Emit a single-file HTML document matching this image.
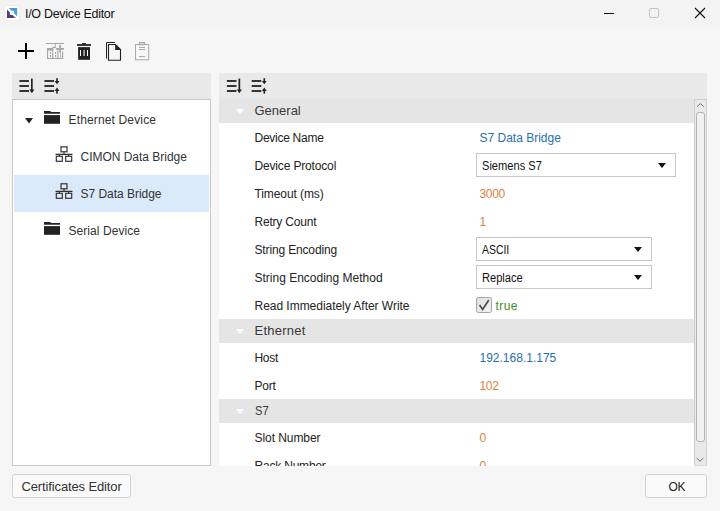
<!DOCTYPE html>
<html>
<head>
<meta charset="utf-8">
<title>I/O Device Editor</title>
<style>
html,body{margin:0;padding:0;}
body{width:720px;height:511px;overflow:hidden;background:#f6f6f6;font-family:"Liberation Sans",sans-serif;font-size:12px;color:#222;position:relative;}
.abs{position:absolute;}
.t{position:absolute;white-space:nowrap;line-height:16px;height:16px;}
#titlebar{left:0;top:0;width:720px;height:28px;background:#f3f3f3;}
.hdr{background:#e9e9e9;height:26px;top:73px;}
#tree{left:12px;top:99px;width:199px;height:367px;box-sizing:border-box;background:#fff;border:1px solid #c9c9c9;}
.sel{left:14px;top:175px;width:195px;height:37px;background:#dbeafa;}
.tl{color:#333;font-size:12px;}
#grid{left:219px;top:99px;width:475px;height:367px;background:#fff;overflow:hidden;}
.cat{position:absolute;left:0;width:475px;height:24px;background:#e5e5e5;}
.cat .t{left:35.5px;top:4px;font-size:13px;color:#3a3a3a;}
.cat i{position:absolute;left:16.5px;top:9.8px;width:0;height:0;border-left:4px solid transparent;border-right:4px solid transparent;border-top:5.6px solid #fff;}
.lbl{left:35.5px;color:#222;font-size:12px;}
.val{left:260.5px;font-size:12px;}
.blue{color:#2a6fb0;}
.org{color:#d98443;}
.grn{color:#3f8f22;}
.combo{position:absolute;left:257px;height:24px;box-sizing:border-box;border:1px solid #c6c6c6;background:#fff;}
.combo .t{left:4.8px;top:3.5px;color:#111;font-size:12px;transform-origin:0 50%;}
.combo i{position:absolute;right:8.6px;top:9.3px;width:0;height:0;border-left:4.2px solid transparent;border-right:4.2px solid transparent;border-top:5px solid #111;}
.btn{position:absolute;top:474px;height:24px;box-sizing:border-box;border:1px solid #d2d2d2;border-radius:2.5px;background:#fafafa;}
#sb{left:694px;top:99px;width:13px;height:367px;box-sizing:border-box;background:#e9e9e9;border:1px solid #cfcfcf;border-bottom-color:#dadada;}
#thumb{left:696px;top:112px;width:9px;height:330px;box-sizing:border-box;border:1px solid #b4b4b4;border-radius:3px;background:#f1f1f1;}
svg{position:absolute;overflow:visible;}
</style>
</head>
<body>
<div id="titlebar" class="abs"></div>

<!-- app icon -->
<svg style="left:4px;top:5px" width="16" height="16" viewBox="4 5 16 16">
  <rect x="4" y="5" width="16" height="16" fill="#fff"/>
  <rect x="4.5" y="5.5" width="15" height="15" fill="none" stroke="#ececec" stroke-width="1"/>
  <defs><linearGradient id="gb" x1="0" y1="0" x2="1" y2="1"><stop offset="0" stop-color="#3f9dc8"/><stop offset="1" stop-color="#4aa8d6"/></linearGradient></defs>
  <polygon points="8.8,8 17.2,8 17.2,16.4" fill="url(#gb)"/>
  <polygon points="7,9.4 7,18 15.6,18" fill="#5c3c80"/>
  <rect x="9.9" y="10.8" width="3.9" height="4" fill="#fff"/>
</svg>
<div class="t" style="left:25px;top:5.5px;font-size:12.5px;color:#111;letter-spacing:-0.3px;">I/O Device Editor</div>

<!-- window controls -->
<svg style="left:600px;top:0" width="120" height="28" viewBox="600 0 120 28">
  <rect x="604" y="13" width="10" height="1" fill="#111"/>
  <rect x="649.5" y="8.5" width="9" height="9" rx="1.5" fill="none" stroke="#c4c4c4" stroke-width="1"/>
  <path d="M695 8 L705 18 M705 8 L695 18" stroke="#111" stroke-width="1.1" fill="none"/>
</svg>

<!-- toolbar icons -->
<svg style="left:0;top:36px" width="170" height="30" viewBox="0 36 170 30">
  <!-- plus -->
  <rect x="18" y="50" width="16" height="2" fill="#000"/>
  <rect x="25" y="43" width="2" height="16" fill="#000"/>
  <!-- add device (disabled) -->
  <g fill="#a6a6a6">
    <rect x="46" y="43" width="18" height="1"/>
    <rect x="54.7" y="43" width="1" height="4.6"/>
    <rect x="52.4" y="47" width="3.3" height="1.1"/>
    <rect x="47" y="48" width="5.8" height="2.6"/>
    <rect x="47" y="48" width="1.1" height="11"/>
    <rect x="47" y="57.9" width="16.2" height="1.1"/>
    <rect x="62.1" y="51.5" width="1.1" height="7.5"/>
    <rect x="52.2" y="47.5" width="1.1" height="11"/>
    <rect x="57.3" y="50" width="1.1" height="9"/>
    <rect x="49.9" y="52" width="1.1" height="1.9"/><rect x="49.9" y="55" width="1.1" height="1.9"/>
    <rect x="55" y="52" width="1.1" height="1.9"/><rect x="55" y="55" width="1.1" height="1.9"/>
    <rect x="60" y="53.2" width="1.1" height="1.2"/><rect x="60" y="55.2" width="1.1" height="1.9"/>
    <rect x="56.1" y="48" width="7.9" height="1.8"/>
    <rect x="59.2" y="45" width="1.8" height="7.6"/>
  </g>
  <!-- trash -->
  <g fill="#222">
    <rect x="82.2" y="43" width="3.7" height="1.4"/>
    <rect x="77" y="44.1" width="14" height="1.8"/>
    <rect x="78.1" y="47.1" width="11.9" height="12.7"/>
  </g>
  <rect x="80" y="50" width="1" height="6" fill="#fff"/>
  <rect x="83.4" y="50" width="1.3" height="6" fill="#d2d2d2"/>
  <rect x="87" y="50" width="1" height="6" fill="#fff"/>
  <!-- copy -->
  <path d="M106.5 58.7 V42.5 H115" fill="none" stroke="#222" stroke-width="1"/>
  <path d="M108.5 44.5 H115.5 L120.5 49.5 V60.3 H108.5 Z" fill="none" stroke="#222" stroke-width="1.1"/>
  <polygon points="115.2,44.4 115.2,50 120.8,50" fill="#222"/>
  <!-- paste (disabled) -->
  <g fill="none" stroke="#ababab" stroke-width="1">
    <rect x="135.5" y="44.5" width="13.2" height="15.3"/>
    <rect x="139.6" y="42.6" width="4.8" height="2" stroke-width="1.3"/>
    <path d="M139 47.5 H145 M139 49.5 H145 M139 56.5 H145"/>
  </g>
</svg>

<!-- left panel -->
<div class="abs hdr" style="left:12px;width:199px;"></div>
<div id="tree" class="abs"></div>
<div class="abs sel"></div>

<!-- right panel -->
<div class="abs hdr" style="left:219px;width:488px;"></div>

<!-- sort icons (both headers) -->
<svg style="left:0;top:73px" width="300" height="26" viewBox="0 73 300 26">
  <defs>
    <g id="srt1">
      <rect x="0.4" y="7.1" width="9.6" height="1.8"/><rect x="0.4" y="12.1" width="9.6" height="1.8"/><rect x="0.4" y="17.1" width="9.6" height="1.8"/>
      <rect x="12" y="5.6" width="1.7" height="11.4"/>
      <polygon points="10.3,16.4 15.4,16.4 12.85,20.2"/>
    </g>
    <g id="srt2">
      <rect x="0.4" y="7.1" width="9.6" height="1.8"/><rect x="0.4" y="12.1" width="9.6" height="1.8"/><rect x="0.4" y="17.1" width="9.6" height="1.8"/>
      <rect x="12.2" y="5.2" width="1.6" height="4"/>
      <polygon points="10.6,8 15.4,8 13,11.3"/>
      <rect x="12.2" y="17" width="1.6" height="3.6"/>
      <polygon points="10.6,17.9 15.4,17.9 13,14.6"/>
    </g>
  </defs>
  <g fill="#222">
    <use href="#srt1" x="19" y="73"/>
    <use href="#srt2" x="44" y="73"/>
    <use href="#srt1" x="226.5" y="73"/>
    <use href="#srt2" x="251.3" y="73"/>
  </g>
</svg>

<!-- tree content -->
<svg style="left:12px;top:99px" width="199" height="367" viewBox="12 99 199 367">
  <polygon points="25,118 33,118 29,123.6" fill="#222"/>
  <g fill="#222">
    <path d="M44 111 H50.2 L51.2 112 H60 V113.8 H44 Z"/>
    <rect x="44" y="115.1" width="16" height="8.7"/>
    <path d="M44 222 H50.2 L51.2 223 H60 V224.8 H44 Z"/>
    <rect x="44" y="226.1" width="16" height="8.7"/>
  </g>
  <defs>
    <g id="net" fill="none" stroke="#2e2e2e" stroke-width="1.15">
      <rect x="5.5" y="0.5" width="6" height="5"/>
      <path d="M8.5 5.5 V8 M0 8 H17"/>
      <path d="M3.8 8 V10 M13.2 8 V10"/>
      <rect x="0.8" y="10" width="6" height="5"/>
      <rect x="10.2" y="10" width="6" height="5"/>
    </g>
  </defs>
  <use href="#net" x="55.5" y="146.3"/>
  <use href="#net" x="55.5" y="183.3"/>
</svg>
<div class="t tl" style="left:68.5px;top:112px;letter-spacing:0.15px;">Ethernet Device</div>
<div class="t tl" style="left:80.5px;top:149px;letter-spacing:-0.02px;">CIMON Data Bridge</div>
<div class="t tl" style="left:80.5px;top:186px;letter-spacing:-0.03px;">S7 Data Bridge</div>
<div class="t tl" style="left:68.5px;top:223px;letter-spacing:0.06px;">Serial Device</div>

<!-- property grid -->
<div id="grid" class="abs">
  <div class="cat" style="top:0"><i></i><div class="t">General</div></div>
  <div class="t lbl" style="top:31px;letter-spacing:-0.27px;">Device Name</div>
  <div class="t lbl" style="top:59px;letter-spacing:-0.16px;">Device Protocol</div>
  <div class="t lbl" style="top:87px;letter-spacing:-0.09px;">Timeout (ms)</div>
  <div class="t lbl" style="top:115px;letter-spacing:-0.2px;">Retry Count</div>
  <div class="t lbl" style="top:143px;letter-spacing:-0.15px;">String Encoding</div>
  <div class="t lbl" style="top:171px;">String Encoding Method</div>
  <div class="t lbl" style="top:199px;letter-spacing:-0.03px;">Read Immediately After Write</div>
  <div class="cat" style="top:220px"><i></i><div class="t" style="letter-spacing:0.25px;">Ethernet</div></div>
  <div class="t lbl" style="top:251px;letter-spacing:-0.3px;">Host</div>
  <div class="t lbl" style="top:279px;letter-spacing:-0.25px;">Port</div>
  <div class="cat" style="top:300px"><i></i><div class="t" style="transform:scaleX(0.86);transform-origin:0 50%;">S7</div></div>
  <div class="t lbl" style="top:331px;letter-spacing:-0.06px;">Slot Number</div>
  <div class="t lbl" style="top:359px;letter-spacing:-0.2px;">Rack Number</div>

  <div class="t val blue" style="top:31px;">S7 Data Bridge</div>
  <div class="combo" style="top:54px;width:200px;"><div class="t" style="transform:scaleX(0.925);">Siemens S7</div><i></i></div>
  <div class="t val org" style="top:87px;letter-spacing:-0.3px;">3000</div>
  <div class="t val org" style="top:115px;">1</div>
  <div class="combo" style="top:138px;width:176px;"><div class="t" style="transform:scaleX(0.87);">ASCII</div><i></i></div>
  <div class="combo" style="top:166px;width:176px;"><div class="t" style="transform:scaleX(0.925);">Replace</div><i></i></div>
  <svg style="left:257px;top:198px" width="16" height="16" viewBox="0 0 16 16">
    <defs><linearGradient id="cg" x1="0" y1="0" x2="1" y2="1"><stop offset="0" stop-color="#dedede"/><stop offset="1" stop-color="#f3f3f3"/></linearGradient></defs>
    <rect x="0.5" y="0.5" width="15" height="15" rx="1.8" fill="url(#cg)" stroke="#a6a6a6"/>
    <path d="M3.6 8 L6.6 12.4 L12.8 3" fill="none" stroke="#4c4c4c" stroke-width="1.7"/>
  </svg>
  <div class="t val grn" style="left:276.5px;top:199px;letter-spacing:0.4px;">true</div>
  <div class="t val blue" style="top:251px;">192.168.1.175</div>
  <div class="t val org" style="top:279px;letter-spacing:-0.3px;">102</div>
  <div class="t val org" style="top:331px;">0</div>
  <div class="t val org" style="top:359px;">0</div>
</div>

<!-- scrollbar -->
<div id="sb" class="abs"></div>
<div id="thumb" class="abs"></div>
<svg style="left:694px;top:99px" width="13" height="367" viewBox="694 99 13 367">
  <path d="M697 106.6 L700.3 103.6 L703.6 106.6" fill="none" stroke="#747474" stroke-width="1"/>
  <path d="M696.6 458 L700 461.2 L703.4 458" fill="none" stroke="#747474" stroke-width="1"/>
</svg>

<!-- buttons -->
<div class="btn" style="left:12px;width:119px;"><div class="t" style="left:8.5px;top:3.5px;font-size:13px;color:#333;letter-spacing:-0.13px;">Certificates Editor</div></div>
<div class="btn" style="left:645px;width:62px;"><div class="t" style="left:22.5px;top:3.5px;font-size:12px;color:#222;letter-spacing:-0.3px;">OK</div></div>
</body>
</html>
